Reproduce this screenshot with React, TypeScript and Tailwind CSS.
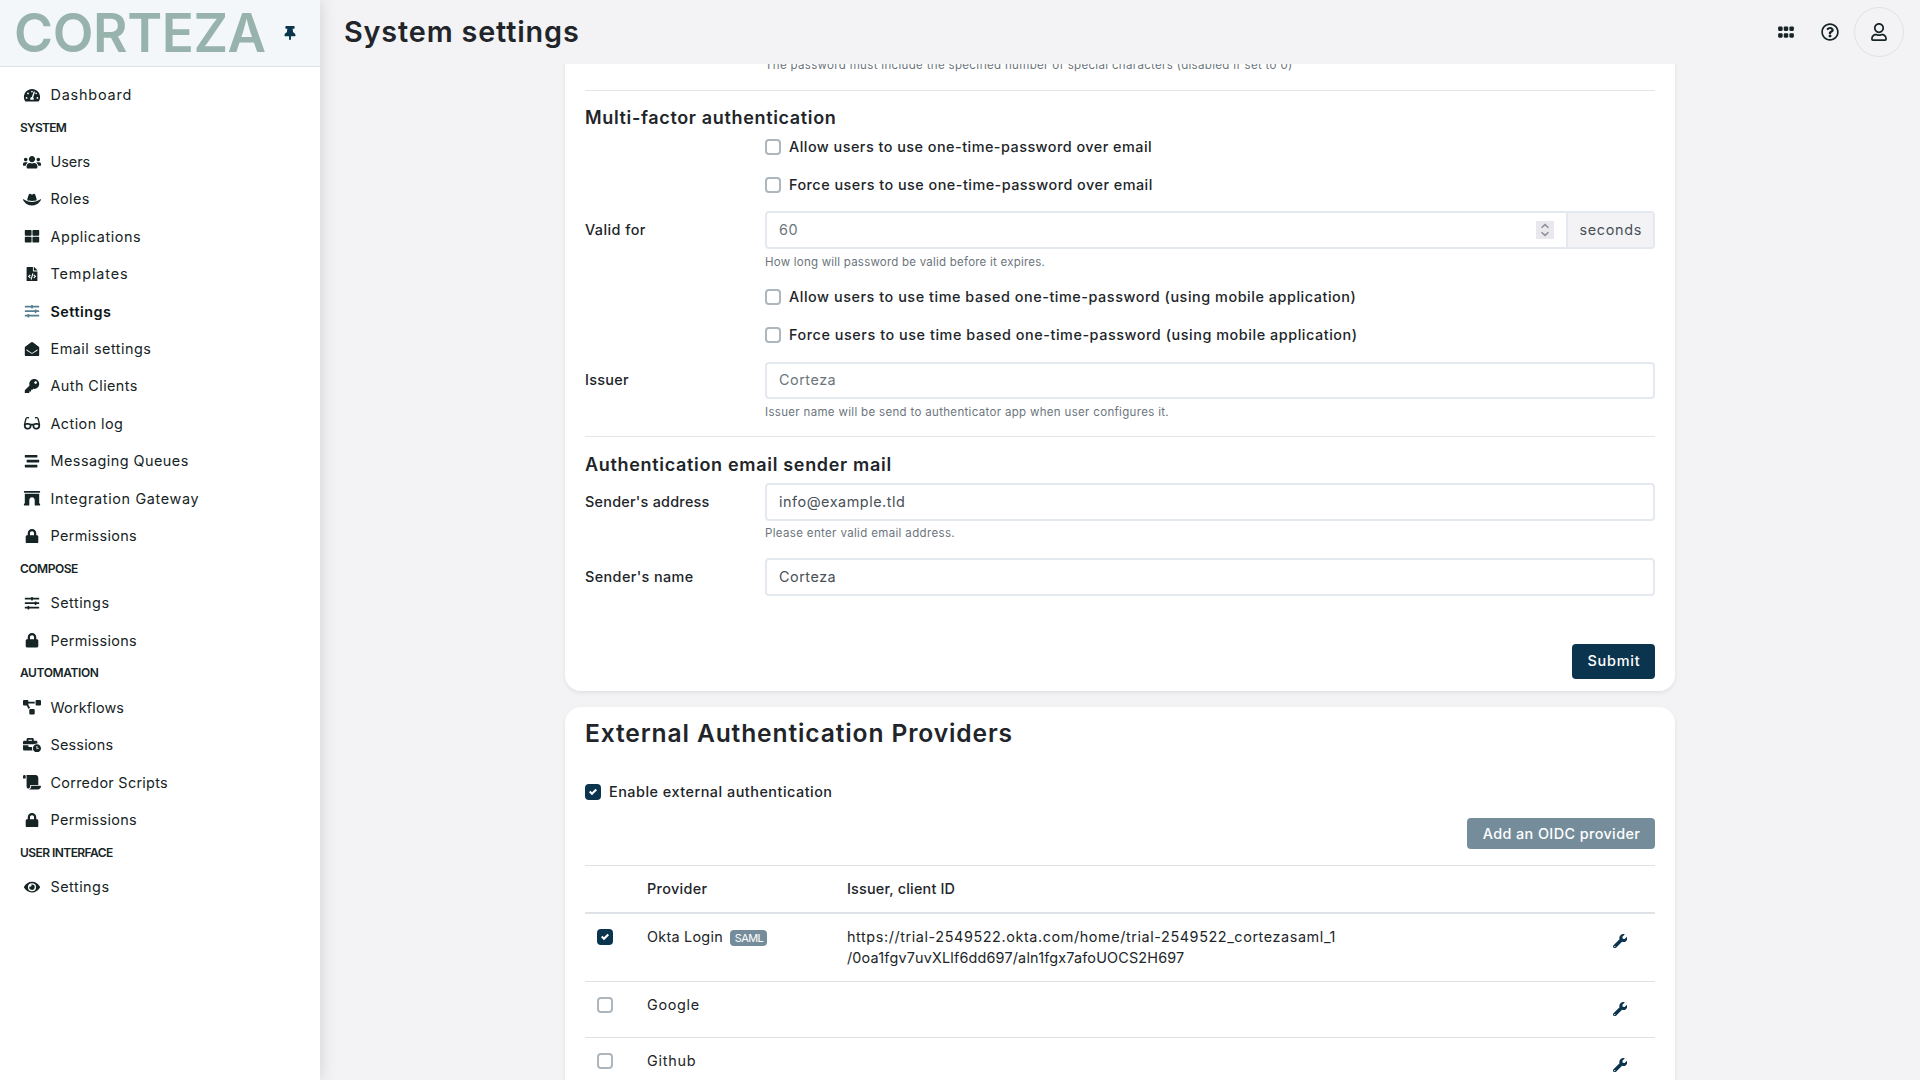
import type { ReactNode } from "react";
import type { IconType } from "react-icons";
import {
  FaArchway,
  FaBusinessTime,
  FaEnvelopeOpen,
  FaEye,
  FaFileCode,
  FaGlasses,
  FaGripHorizontal,
  FaHatCowboy,
  FaKey,
  FaLock,
  FaProjectDiagram,
  FaRegQuestionCircle,
  FaRegUser,
  FaScroll,
  FaSlidersH,
  FaStream,
  FaTachometerAlt,
  FaThLarge,
  FaThumbtack,
  FaUsers,
  FaWrench,
} from "react-icons/fa";

type NavItem = { label: string; icon: IconType; tracking: string; active?: boolean };
type NavGroup = { title?: string; tracking?: string; items: NavItem[] };

const permissions: NavItem = { label: "Permissions", icon: FaLock, tracking: "tracking-[0.35px]" };

const groups: NavGroup[] = [
  { items: [{ label: "Dashboard", icon: FaTachometerAlt, tracking: "tracking-[0.82px]" }] },
  {
    title: "SYSTEM",
    tracking: "tracking-[-0.72px]",
    items: [
      { label: "Users", icon: FaUsers, tracking: "tracking-[0px]" },
      { label: "Roles", icon: FaHatCowboy, tracking: "tracking-[0.41px]" },
      { label: "Applications", icon: FaThLarge, tracking: "tracking-[0.57px]" },
      { label: "Templates", icon: FaFileCode, tracking: "tracking-[0.88px]" },
      { label: "Settings", icon: FaSlidersH, tracking: "tracking-[0.48px]", active: true },
      { label: "Email settings", icon: FaEnvelopeOpen, tracking: "tracking-[0.51px]" },
      { label: "Auth Clients", icon: FaKey, tracking: "tracking-[0.42px]" },
      { label: "Action log", icon: FaGlasses, tracking: "tracking-[0.44px]" },
      { label: "Messaging Queues", icon: FaStream, tracking: "tracking-[0.47px]" },
      { label: "Integration Gateway", icon: FaArchway, tracking: "tracking-[0.66px]" },
      permissions,
    ],
  },
  {
    title: "COMPOSE",
    tracking: "tracking-[-0.48px]",
    items: [{ label: "Settings", icon: FaSlidersH, tracking: "tracking-[0.49px]" }, permissions],
  },
  {
    title: "AUTOMATION",
    tracking: "tracking-[-0.4px]",
    items: [
      { label: "Workflows", icon: FaProjectDiagram, tracking: "tracking-[0.16px]" },
      { label: "Sessions", icon: FaBusinessTime, tracking: "tracking-[0.21px]" },
      { label: "Corredor Scripts", icon: FaScroll, tracking: "tracking-[0.29px]" },
      permissions,
    ],
  },
  {
    title: "USER INTERFACE",
    tracking: "tracking-[-0.56px]",
    items: [{ label: "Settings", icon: FaEye, tracking: "tracking-[0.49px]" }],
  },
];

function Sidebar() {
  return (
    <aside className="relative z-10 flex w-[320px] shrink-0 flex-col bg-white text-[#162425] shadow-[0_0_16px_rgba(0,0,0,0.15)]">
      <div className="flex h-[67px] shrink-0 items-center border-b border-[#dee2e6] bg-[#f3f7fa] pl-[14px]">
        <span className="w-[269px] text-[53px] leading-[66px] font-semibold tracking-[-0.4px] text-[#97b3ac]">
          CORTEZA
        </span>
        <FaThumbtack className="h-[14.8px] w-[14px] text-[#0b344e]" />
      </div>
      <nav className="flex flex-col pt-[9px]">
        {groups.map((g, i) => (
          <div key={i}>
            {g.title && (
              <div className={`flex h-[29.8px] items-center pl-[20px] pb-[1.5px] text-[12px] font-semibold ${g.tracking}`}>
                {g.title}
              </div>
            )}
            {g.items.map((item, j) => (
              <div key={j} className="flex h-[37.4px] items-center">
                <div className="flex w-[64px] justify-center">
                  <item.icon className={`h-[14.4px] w-[18px] ${item.active ? "text-[#568090]" : ""}`} />
                </div>
                <span
                  className={`-ml-[13.5px] whitespace-nowrap ${item.tracking} ${
                    item.active ? "font-semibold text-[#0c1516]" : ""
                  }`}
                >
                  {item.label}
                </span>
              </div>
            ))}
          </div>
        ))}
      </nav>
    </aside>
  );
}

function Box({ checked = false }: { checked?: boolean }) {
  return checked ? (
    <span className="flex size-4 shrink-0 items-center justify-center rounded-[4px] bg-[#0b344e]">
      <svg viewBox="0 0 8 8" className="size-2" fill="#fff">
        <path d="M6.564.75l-3.59 3.612-1.538-1.55L0 4.26l2.974 2.99L8 2.193z" />
      </svg>
    </span>
  ) : (
    <span className="block size-4 shrink-0 rounded-[4px] border-2 border-[#adb5bd] bg-white" />
  );
}

function Check({ label, tracking, className }: { label: string; tracking: string; className: string }) {
  return (
    <div className={`ml-[180px] flex h-4 items-center gap-2 font-medium ${className}`}>
      <Box />
      <span className={`pb-px ${tracking}`}>{label}</span>
    </div>
  );
}

function Help({ children, className }: { children: ReactNode; className: string }) {
  return (
    <div
      className={`ml-[180px] flex h-[18px] items-center pt-[2px] text-[11.5px] whitespace-nowrap text-[#6c757d] ${className}`}
    >
      {children}
    </div>
  );
}

function Field({
  label,
  tracking,
  className,
  children,
}: {
  label: string;
  tracking: string;
  className: string;
  children: ReactNode;
}) {
  return (
    <div className={`flex ${className}`}>
      <div className={`flex w-[180px] shrink-0 items-center pb-px font-medium ${tracking}`}>{label}</div>
      <div className="flex flex-1 rounded-[4px] border-2 border-[#e4e9ef] bg-white">{children}</div>
    </div>
  );
}

function Spinner() {
  return (
    <span className="mr-3 flex size-[18px] items-center justify-center self-center bg-[#e9e8ed]">
      <svg viewBox="0 0 18 18" className="size-[18px]" fill="none" stroke="#8f8f9d" strokeWidth="1.5">
        <path d="M5.5 6.8 9 3.6l3.5 3.2M5.5 11.2 9 14.4l3.5-3.2" />
      </svg>
    </span>
  );
}

function AuthCard() {
  return (
    <section className="rounded-b-[16px] bg-white px-5 pb-3 shadow-[0_2px_4px_rgba(0,0,0,0.075)]">
      <Help className="-mt-[8px] tracking-[0.33px]">
        The password must include the specified number of special characters (disabled if set to 0)
      </Help>
      <hr className="mt-4 border-[#e5e5e6]" />
      <h2 className="mt-[14px] flex h-[26px] items-center pb-px text-[18px] font-semibold tracking-[0.65px]">
        Multi-factor authentication
      </h2>
      <Check
        className="mt-2"
        tracking="tracking-[0.48px]"
        label="Allow users to use one-time-password over email"
      />
      <Check
        className="mt-[22px]"
        tracking="tracking-[0.475px]"
        label="Force users to use one-time-password over email"
      />
      <Field className="mt-[18px] h-[38px]" label="Valid for" tracking="tracking-[0.43px]">
        <span className="flex flex-1 items-center pb-px pl-[12px] tracking-[0.7px] text-[#6c757d]">60</span>
        <Spinner />
        <span className="flex w-[87px] items-center border-l-2 border-[#e4e9ef] bg-[#f3f3f5] pb-px pl-[11.5px] tracking-[0.69px] text-[#495057]">
          seconds
        </span>
      </Field>
      <Help className="mt-1 tracking-[0.225px]">How long will password be valid before it expires.</Help>
      <Check
        className="mt-[18px]"
        tracking="tracking-[0.545px]"
        label="Allow users to use time based one-time-password (using mobile application)"
      />
      <Check
        className="mt-[22px]"
        tracking="tracking-[0.55px]"
        label="Force users to use time based one-time-password (using mobile application)"
      />
      <Field className="mt-[19px] h-[37px]" label="Issuer" tracking="tracking-[0.3px]">
        <span className="flex items-center pb-px pl-[12px] tracking-[0.52px] text-[#6c757d]">Corteza</span>
      </Field>
      <Help className="mt-1 tracking-[0.324px]">
        Issuer name will be send to authenticator app when user configures it.
      </Help>
      <hr className="mt-[15px] border-[#e5e5e6]" />
      <h2 className="mt-[14px] flex h-[26px] items-center text-[18px] font-semibold tracking-[0.68px]">
        Authentication email sender mail
      </h2>
      <Field className="mt-[6px] h-[38px]" label="Sender's address" tracking="tracking-[0.25px]">
        <span className="flex items-center pb-px pl-[12px] tracking-[0.53px] text-[#495057]">info@example.tld</span>
      </Field>
      <Help className="mt-[3px] tracking-[0.35px]">Please enter valid email address.</Help>
      <Field className="mt-4 h-[38px]" label="Sender's name" tracking="tracking-[0.4px]">
        <span className="flex items-center pb-px pl-[12px] tracking-[0.52px] text-[#495057]">Corteza</span>
      </Field>
      <div className="mt-12 flex justify-end">
        <button className="h-[35px] w-[83px] rounded-[4px] bg-[#0b344e] pb-[2px] pl-px font-medium tracking-[0.8px] text-white">
          Submit
        </button>
      </div>
    </section>
  );
}

function ProviderRow({
  name,
  checked,
  className,
  children,
}: {
  name: ReactNode;
  checked?: boolean;
  className: string;
  children?: ReactNode;
}) {
  return (
    <div className={`flex border-b border-[#dee2e6] leading-[21px] ${className}`}>
      <div className="w-[62px] pt-[15px] pl-3">
        <Box checked={checked} />
      </div>
      <div className="flex w-[200px] pt-3">{name}</div>
      <div className="flex-1 pt-3">{children}</div>
      <div className="w-[42px] pt-[20px]">
        <FaWrench className="size-[14.4px] text-[#0b344e]" />
      </div>
    </div>
  );
}

function ProvidersCard() {
  return (
    <section className="mt-4 rounded-t-[16px] bg-white px-5 pt-[13px] shadow-[0_2px_4px_rgba(0,0,0,0.075)]">
      <h1 className="flex h-[26px] items-center text-[24.6px] font-semibold tracking-[0.87px]">
        External Authentication Providers
      </h1>
      <div className="mt-[38px] flex h-4 items-center gap-2 font-medium tracking-[0.5px]">
        <Box checked />
        <span className="pb-px">Enable external authentication</span>
      </div>
      <div className="mt-[18px] flex justify-end">
        <button className="h-[31px] w-[188px] rounded-[4px] bg-[#758d9b] pl-px font-medium tracking-[0.4px] text-white">
          Add an OIDC provider
        </button>
      </div>
      <div className="mt-4 flex h-[49px] items-center border-t border-b-2 border-t-[#dee2e6] border-b-[#dee2e6] pb-px pl-[62px] font-medium">
        <span className="w-[200px] tracking-[0.32px]">Provider</span>
        <span className="tracking-[0.19px]">Issuer, client ID</span>
      </div>
      <ProviderRow
        checked
        className="h-[68px]"
        name={
          <>
            <span className="tracking-[0.25px]">Okta Login</span>
            <span className="mt-1 ml-[7.5px] flex h-4 w-[37px] items-center justify-center rounded-[4px] bg-[#758d9b] text-[11px] tracking-[-0.6px] text-white">
              SAML
            </span>
          </>
        }
      >
        <div className="tracking-[0.59px]">https://trial-2549522.okta.com/home/trial-2549522_cortezasaml_1</div>
        <div className="tracking-[0.18px]">/0oa1fgv7uvXLlf6dd697/aln1fgx7afoUOCS2H697</div>
      </ProviderRow>
      <ProviderRow className="h-[56px]" name={<span className="tracking-[0.7px]">Google</span>} />
      <ProviderRow className="h-[56px]" name={<span className="tracking-[0.75px]">Github</span>} />
    </section>
  );
}

export default function App() {
  return (
    <div className="flex h-[1080px] w-[1920px] overflow-hidden bg-[#f3f3f5] font-['Inter',sans-serif] text-[14.4px] text-[#212529]">
      <Sidebar />
      <div className="flex flex-1 flex-col">
        <header className="flex h-16 shrink-0 items-center pr-4 pl-6 text-[#162425]">
          <h1 className="flex-1 text-[28.8px] font-semibold tracking-[0.85px] text-[#212529]">System settings</h1>
          <FaGripHorizontal className="size-[18px]" />
          <FaRegQuestionCircle className="ml-[26px] size-[18px]" />
          <div className="ml-[15px] flex size-[50px] items-center justify-center rounded-full border border-[#dee2e6]">
            <FaRegUser className="size-[18px]" />
          </div>
        </header>
        <main className="ml-[245px] w-[1110px] flex-1 overflow-x-visible overflow-y-clip">
          <AuthCard />
          <ProvidersCard />
        </main>
      </div>
    </div>
  );
}
